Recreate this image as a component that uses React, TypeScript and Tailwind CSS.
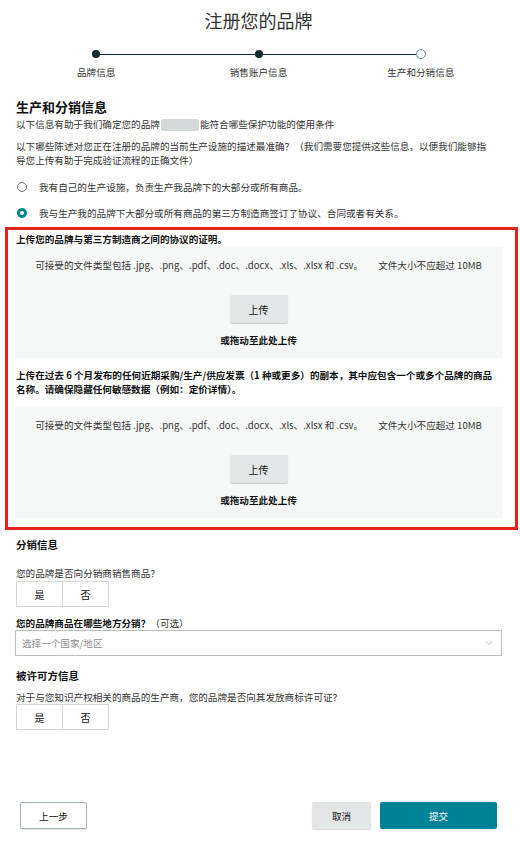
import { ChevronDown } from 'lucide-react';

const font = { fontFamily: '"Noto Sans CJK SC", "Noto Sans", sans-serif' };

const steps = [
  { label: '品牌信息', done: true },
  { label: '销售账户信息', done: true },
  { label: '生产和分销信息', done: false },
];

function Stepper() {
  return (
    <div className="mt-[17px] grid grid-cols-3">
      {steps.map((step, i) => (
        <div key={step.label} className="flex flex-col items-center">
          <div className="flex h-[10px] w-full items-center">
            <div className={`h-px flex-1 ${i === 0 ? '' : 'bg-[#0d2b30]'}`} />
            {step.done ? (
              <div className="h-[8px] w-[8px] rounded-full bg-[#0d2b30]" />
            ) : (
              <div className="h-[10px] w-[10px] rounded-full border border-[#5f9aa3] bg-white" />
            )}
            <div className={`h-px flex-1 ${i === steps.length - 1 ? '' : 'bg-[#0d2b30]'}`} />
          </div>
          <div className="mt-[6px] text-[9.6px] leading-[14px] text-[#333]">{step.label}</div>
        </div>
      ))}
    </div>
  );
}

function Radio({ checked, label }: { checked?: boolean; label: string }) {
  return (
    <div className="flex h-[14px] items-center gap-[12px] pl-[1px]">
      {checked ? (
        <span className="h-[10px] w-[10px] rounded-full border-[3px] border-[#008296] bg-white" />
      ) : (
        <span className="h-[10px] w-[10px] rounded-full border border-[#6f7373] bg-white" />
      )}
      <span className="text-[9.6px] leading-[14px] text-[#333]">{label}</span>
    </div>
  );
}

function UploadBox() {
  return (
    <div className="flex flex-col items-center bg-[#f6f7f7] pb-[11px] pt-[11px]">
      <div className="flex justify-center gap-[15px] text-[9.6px] leading-[14px] text-[#333]">
        <span>可接受的文件类型包括 .jpg、.png、.pdf、.doc、.docx、.xls、.xlsx 和 .csv。</span>
        <span>文件大小不应超过 10MB</span>
      </div>
      <button className="mt-[23px] h-[28px] w-[58px] rounded-[2px] bg-[#e3e6e6] text-[10px] text-[#0f1111] shadow-[0_1px_1px_rgba(0,0,0,0.18)]">
        上传
      </button>
      <div className="mt-[10px] text-[9.6px] font-bold leading-[14px] text-[#0f1111]">或拖动至此处上传</div>
    </div>
  );
}

function YesNo() {
  return (
    <div className="flex h-[26px] w-[93px] border border-[#d5d9d9] bg-white text-[10px] text-[#0f1111]">
      <div className="flex flex-1 items-center justify-center border-r border-[#d5d9d9]">是</div>
      <div className="flex flex-1 items-center justify-center">否</div>
    </div>
  );
}

export default function App() {
  return (
    <div
      lang="zh-CN"
      className="min-h-[845px] w-[520px] bg-white pb-[16px] pl-[15px] pr-[18px] text-[#0f1111]"
      style={font}
    >
      <h1 className="pt-[8px] text-center text-[18px] font-normal leading-[24px] text-[#333]">注册您的品牌</h1>

      <Stepper />

      <h2 className="mt-[19px] pl-[1px] text-[13px] font-bold leading-[18px]">生产和分销信息</h2>
      <p className="mt-px pl-[1px] text-[9.6px] leading-[14px] text-[#333]">
        以下信息有助于我们确定您的品牌
        <span className="mx-[1px] inline-block h-[12px] w-[38px] rounded-[2px] bg-[#d6d9d9] align-middle" />
        能符合哪些保护功能的使用条件
      </p>
      <p className="mt-[8px] pl-[1px] text-[9.6px] leading-[14px] text-[#333]">
        以下哪些陈述对您正在注册的品牌的当前生产设施的描述最准确？（我们需要您提供这些信息，以便我们能够指
        <br />
        导您上传有助于完成验证流程的正确文件）
      </p>

      <div className="mt-[13px] pl-[1px]">
        <Radio label="我有自己的生产设施，负责生产我品牌下的大部分或所有商品。" />
      </div>
      <div className="mt-[12px] pl-[1px]">
        <Radio checked label="我与生产我的品牌下大部分或所有商品的第三方制造商签订了协议、合同或者有关系。" />
      </div>

      <div className="ml-[-10px] mr-[-16px] mt-[7px] border-[3px] border-[#e8211d] pb-[9px] pl-[7px] pr-[13px] pt-[2px]">
        <p className="pl-[1px] text-[9.6px] font-bold leading-[14px]">上传您的品牌与第三方制造商之间的协议的证明。</p>
        <div className="mt-px">
          <UploadBox />
        </div>
        <p className="mt-[10px] pl-[1px] text-[9.6px] font-bold leading-[14px]">
          上传在过去 6 个月发布的任何近期采购/生产/供应发票（1 种或更多）的副本，其中应包含一个或多个品牌的商品
          <br />
          名称。请确保隐藏任何敏感数据（例如：定价详情）。
        </p>
        <div className="mt-[11px]">
          <UploadBox />
        </div>
      </div>

      <h3 className="mt-[8px] pl-[1px] text-[10.5px] font-bold leading-[14px]">分销信息</h3>
      <p className="mt-[14px] pl-[1px] text-[9.6px] leading-[14px] text-[#333]">您的品牌是否向分销商销售商品？</p>
      <div className="mt-px pl-[1px]">
        <YesNo />
      </div>

      <p className="mt-[9px] pl-[1px] text-[9.6px] leading-[14px]">
        <span className="font-bold">您的品牌商品在哪些地方分销？</span>
        <span className="text-[#333]">（可选）</span>
      </p>
      <div className="flex h-[26px] items-center justify-between border border-[#b9bdbd] bg-white pl-[6px] pr-[6px]">
        <span className="text-[9.6px] text-[#8a8d8d]">选择一个国家/地区</span>
        <ChevronDown className="h-[12px] w-[12px] text-[#9a9d9d]" strokeWidth={1.5} />
      </div>

      <h3 className="mt-[13px] pl-[1px] text-[10.5px] font-bold leading-[14px]">被许可方信息</h3>
      <p className="mt-[7px] pl-[1px] text-[9.6px] leading-[14px] text-[#333]">
        对于与您知识产权相关的商品的生产商，您的品牌是否向其发放商标许可证？
      </p>
      <div className="pl-[1px]">
        <YesNo />
      </div>

      <div className="mt-[72px] flex items-center justify-between px-[5px]">
        <button className="h-[27px] w-[67px] rounded-[2px] border border-[#9fb3b6] bg-white text-[9.6px] text-[#0f1111] shadow-[0_1px_1px_rgba(0,0,0,0.12)]">
          上一步
        </button>
        <div className="flex gap-[9px]">
          <button className="h-[27px] w-[59px] rounded-[2px] bg-[#e3e6e6] text-[9.6px] text-[#0f1111] shadow-[0_1px_1px_rgba(0,0,0,0.15)]">
            取消
          </button>
          <button className="h-[27px] w-[117px] rounded-[2px] bg-[#008296] text-[9.6px] text-white">提交</button>
        </div>
      </div>
    </div>
  );
}
